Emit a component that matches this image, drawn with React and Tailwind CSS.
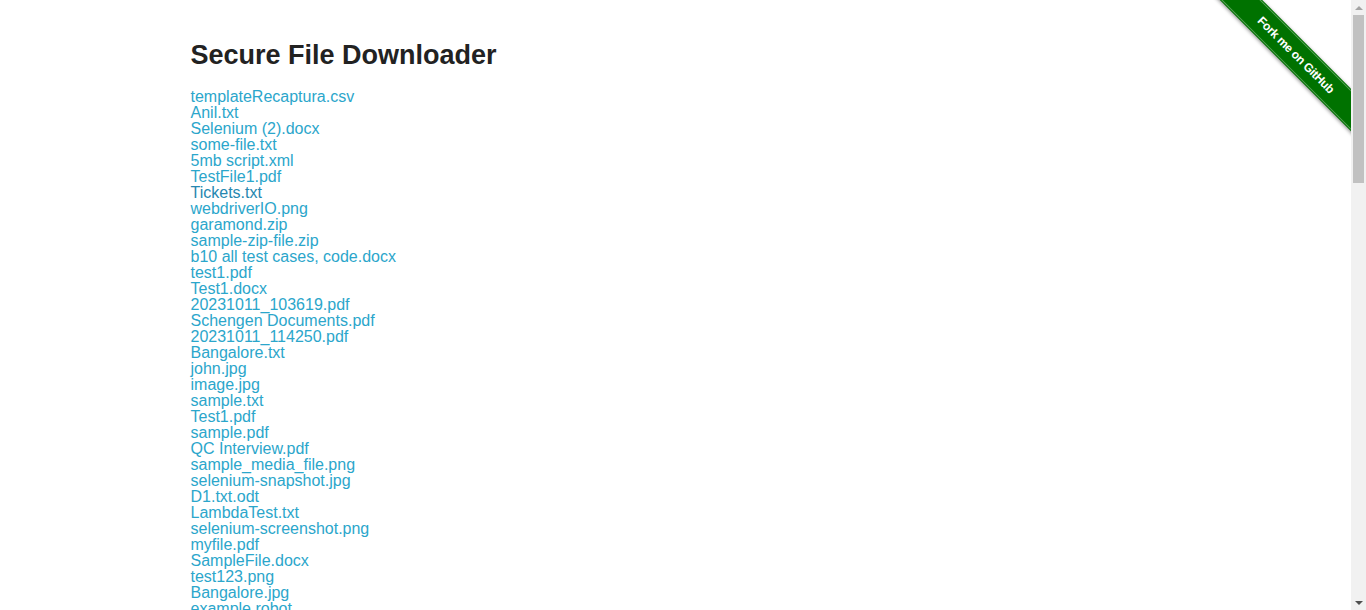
import React from "react";

const files = [
  "templateRecaptura.csv",
  "Anil.txt",
  "Selenium (2).docx",
  "some-file.txt",
  "5mb script.xml",
  "TestFile1.pdf",
  "Tickets.txt",
  "webdriverIO.png",
  "garamond.zip",
  "sample-zip-file.zip",
  "b10 all test cases, code.docx",
  "test1.pdf",
  "Test1.docx",
  "20231011_103619.pdf",
  "Schengen Documents.pdf",
  "20231011_114250.pdf",
  "Bangalore.txt",
  "john.jpg",
  "image.jpg",
  "sample.txt",
  "Test1.pdf",
  "sample.pdf",
  "QC Interview.pdf",
  "sample_media_file.png",
  "selenium-snapshot.jpg",
  "D1.txt.odt",
  "LambdaTest.txt",
  "selenium-screenshot.png",
  "myfile.pdf",
  "SampleFile.docx",
  "test123.png",
  "Bangalore.jpg",
  "example.robot",
];

function ForkRibbon() {
  return (
    <div className="absolute top-0 right-0 w-[149px] h-[149px] overflow-hidden pointer-events-none">
      <a
        href="#"
        className="absolute left-[-16px] top-[40px] w-[220px] h-[30px] rotate-45 bg-[#007200] shadow-[0_1px_4px_rgba(0,0,0,0.45)] flex items-center justify-center"
      >
        <div className="absolute inset-x-0 top-[1px] bottom-[1px] border-y border-[#5aa35a]" />
        <span className="relative text-white font-bold text-[12px] tracking-[-0.3px] font-['Liberation_Sans',sans-serif]">
          Fork me on GitHub
        </span>
      </a>
    </div>
  );
}

function Scrollbar() {
  return (
    <div className="w-[15px] h-screen bg-[#f1f1f1] flex flex-col items-center">
      <div className="h-[15px] flex items-center justify-center">
        <div className="w-0 h-0 border-x-[4px] border-x-transparent border-b-[4px] border-b-[#a3a3a3]" />
      </div>
      <div className="w-[11px] h-[168px] bg-[#c1c1c1]" />
      <div className="flex-1" />
      <div className="h-[15px] flex items-center justify-center">
        <div className="w-0 h-0 border-x-[4px] border-x-transparent border-t-[4px] border-t-[#505050]" />
      </div>
    </div>
  );
}

export default function App() {
  return (
    <div className="flex h-screen overflow-hidden bg-white font-['Liberation_Sans',Arial,sans-serif] text-[#222]">
      <div className="relative flex-1 overflow-hidden">
        <ForkRibbon />
        <div className="max-w-[1000px] mx-auto px-[15px] pt-[38px]">
          <h3 className="text-[27px] leading-[34px] font-bold mb-[17px]">
            Secure File Downloader
          </h3>
          <div className="flex flex-col items-start">
            {files.map((f) => (
              <a
                key={f}
                href="#"
                className={
                  f === "Tickets.txt"
                    ? "text-[16px] leading-[16px] text-[#2687b0]"
                    : "text-[16px] leading-[16px] text-[#2ba6cb]"
                }
              >
                {f}
              </a>
            ))}
          </div>
        </div>
      </div>
      <Scrollbar />
    </div>
  );
}
